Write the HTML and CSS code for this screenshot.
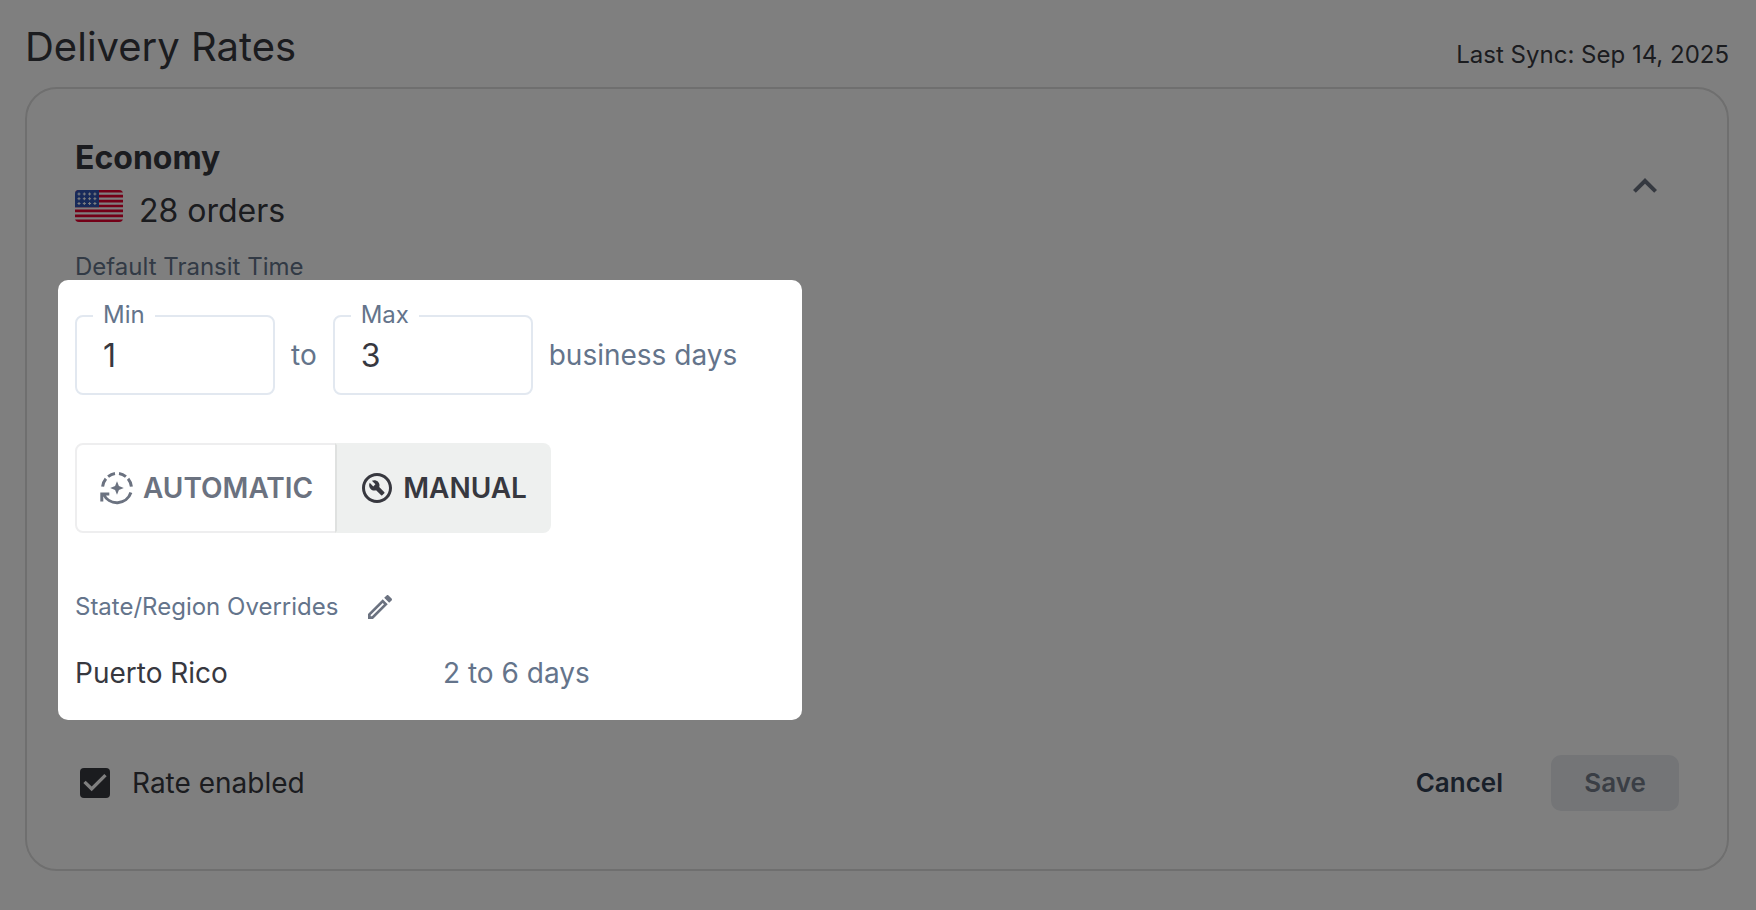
FILE: index.html
```html
<!DOCTYPE html>
<html lang="en">
<head>
<meta charset="utf-8">
<meta name="viewport" content="width=device-width, initial-scale=1">
<title>Delivery Rates</title>
<link rel="stylesheet" href="styles.css">
</head>
<body>
<main class="page">
  <header class="page-header">
    <h1 class="page-title">Delivery Rates</h1>
    <p class="last-sync">Last Sync: Sep 14, 2025</p>
  </header>
  <section class="card">
    <div class="summary">
      <div class="summary-text">
        <h2 class="rate-name">Economy</h2>
        <div class="orders">
          <svg class="flag" viewBox="0 0 48 32" role="img" aria-label="United States">
            <defs><clipPath id="flag-shape"><rect width="48" height="32" rx="4"/></clipPath></defs>
            <g clip-path="url(#flag-shape)">
              <rect width="48" height="32" fill="#fff"/>
              <path d="M0 1.230H48M0 6.150H48M0 11.080H48M0 16H48M0 20.920H48M0 25.850H48M0 30.770H48" stroke="#e6002e" stroke-width="2.600"/>
              <rect width="24" height="17.230" fill="#3055b5"/>
              <path d="M4 2.500v3M2.500 4h3M9.300 2.500v3M7.800 4h3M14.600 2.500v3M13.100 4h3M19.900 2.500v3M18.400 4h3M4 7.200v3M2.500 8.700h3M9.300 7.200v3M7.800 8.700h3M14.600 7.200v3M13.100 8.700h3M19.900 7.200v3M18.400 8.700h3M4 12v3M2.500 13.500h3M9.300 12v3M7.800 13.500h3M14.600 12v3M13.100 13.500h3M19.900 12v3M18.400 13.500h3" stroke="#fff" stroke-width="1"/>
            </g>
          </svg>
          <span>28 orders</span>
        </div>
      </div>
      <button class="icon-button collapse" type="button" aria-label="Collapse" aria-expanded="true">
        <svg class="icon-large" viewBox="0 0 24 24" aria-hidden="true"><path d="m12 8-6 6 1.410 1.410L12 10.830l4.590 4.580L18 14z"/></svg>
      </button>
    </div>
    <h3 class="section-label">Default Transit Time</h3>

    <div class="spotlight">
      <div class="transit">
        <div class="field">
          <label class="field-label" for="min-days">Min</label>
          <input class="field-input" id="min-days" type="text" inputmode="numeric" value="1">
        </div>
        <span>to</span>
        <div class="field">
          <label class="field-label" for="max-days">Max</label>
          <input class="field-input" id="max-days" type="text" inputmode="numeric" value="3">
        </div>
        <span>business days</span>
      </div>

      <div class="toggle" role="group" aria-label="Transit time mode">
        <button class="toggle-button" type="button" aria-pressed="false">
          <svg class="icon-medium" viewBox="0 0 36 36" aria-hidden="true">
            <path d="M3.600 16.700A14.500 14.500 0 0 1 6.900 8.700M9.100 6.600A14.500 14.500 0 0 1 16 3.600M20 3.600A14.500 14.500 0 0 1 26.900 6.600M29.100 8.700A14.500 14.500 0 0 1 32.400 16.700M31.900 22.500A14.700 14.700 0 0 1 4.500 24M2.800 31.500V24.100H10.300" fill="none" stroke="currentColor" stroke-width="3"/>
            <path d="M18 11.200l1.900 4.900 4.900 1.900-4.900 1.900-1.900 4.900-1.900-4.900-4.900-1.900 4.900-1.900z"/>
          </svg>
          AUTOMATIC
        </button>
        <button class="toggle-button is-selected" type="button" aria-pressed="true">
          <svg class="icon-medium" viewBox="0 0 24 24" aria-hidden="true">
            <path d="M12 2C6.480 2 2 6.480 2 12s4.480 10 10 10 10-4.480 10-10S17.520 2 12 2zm0 18c-4.410 0-8-3.590-8-8s3.590-8 8-8 8 3.590 8 8-3.590 8-8 8z"/>
            <path d="M13.490 11.380c.43-1.220.17-2.640-.81-3.620-1.110-1.110-2.790-1.300-4.100-.59l2.350 2.350-1.410 1.410-2.350-2.350c-.71 1.320-.52 2.990.59 4.100.98.98 2.400 1.240 3.620.81l3.410 3.410c.2.200.51.200.71 0l1.400-1.400c.2-.2.200-.51 0-.71l-3.410-3.410z"/>
          </svg>
          MANUAL
        </button>
      </div>

      <div class="overrides-head">
        <h3 class="section-label" id="overrides-title">State/Region Overrides</h3>
        <button class="icon-button" type="button" aria-label="Edit overrides">
          <svg class="icon-small" viewBox="0 0 24 24" aria-hidden="true"><path d="M14.060 9.020l.92.920L5.920 19H5v-.92l9.060-9.060M17.660 3c-.25 0-.51.100-.7.290l-1.830 1.830 3.750 3.750 1.830-1.830c.39-.39.390-1.020 0-1.410l-2.340-2.340c-.2-.2-.45-.29-.71-.29zm-3.600 3.190L3 17.250V21h3.750L17.810 9.940l-3.750-3.750z"/></svg>
        </button>
      </div>
      <table class="overrides" aria-labelledby="overrides-title">
        <tbody>
          <tr><th class="region" scope="row">Puerto Rico</th><td class="days">2 to 6 days</td></tr>
        </tbody>
      </table>
    </div>

    <footer class="actions">
      <label class="enabled"><input class="checkbox" type="checkbox" checked>Rate enabled</label>
      <div class="buttons">
        <button class="button" type="button">Cancel</button>
        <button class="button button-primary" type="button" disabled>Save</button>
      </div>
    </footer>
  </section>
</main>
</body>
</html>
```

FILE: styles.css
```css
:root {
  --ink: #37383f;
  --muted: #64748b;
  --icon: #6b7280;
  --line: #e2e8f0;
}

* {
  box-sizing: border-box;
}

body {
  margin: 0;
  overflow-x: hidden;
  background: #fff;
  color: var(--ink);
  font-family: Inter, "Liberation Sans", sans-serif;
  font-size: 28px;
  line-height: 32px;
}

h1,
h2,
h3,
p {
  margin: 0;
}

button,
input {
  font: inherit;
}

svg {
  display: block;
  flex: none;
  fill: currentColor;
}

.page {
  position: relative;
  min-height: 100vh;
  padding: 23px 27px 39px 25px;
  overflow: hidden;
}

.page-header {
  display: flex;
  justify-content: space-between;
  align-items: flex-end;
  margin-bottom: 16px;
}

.page-title {
  font-size: 40px;
  font-weight: 400;
  line-height: 48px;
}

.last-sync {
  font-size: 24px;
}

.card {
  padding: 49px 48px 58px;
  border: 2px solid #dedede;
  border-radius: 32px;
}

.summary {
  display: flex;
  justify-content: space-between;
  align-items: flex-start;
}

.summary-text {
  display: grid;
  gap: 12px;
  font-size: 32px;
  line-height: 42px;
}

.rate-name {
  font-size: 32px;
  font-weight: 700;
  line-height: 40px;
}

.orders {
  display: flex;
  align-items: flex-start;
  gap: 16px;
}

.flag {
  width: 48px;
  height: 32px;
}

.icon-button {
  display: flex;
  padding: 10px;
  border: 0;
  background: none;
  color: var(--icon);
}

.collapse {
  margin-top: 14px;
}

.icon-large {
  width: 48px;
  height: 48px;
}

.icon-medium {
  width: 36px;
  height: 36px;
}

.icon-small {
  width: 32px;
  height: 32px;
}

.section-label {
  color: var(--muted);
  font-size: 24px;
  font-weight: 400;
  line-height: 28px;
}

.summary + .section-label {
  margin-top: 21px;
}

/* The highlighted step; its shadow dims the rest of the page. */
.spotlight {
  position: relative;
  z-index: 1;
  display: flex;
  flex-direction: column;
  align-items: flex-start;
  max-width: 744px;
  margin-top: -1px;
  margin-left: -17px;
  padding: 35px 17px 31px;
  border-radius: 10px;
  background: #fff;
  box-shadow: 0 0 0 9999px rgba(0, 0, 0, 0.5);
}

.transit {
  display: flex;
  align-items: center;
  gap: 16px;
  color: var(--muted);
}

.field {
  position: relative;
  width: 200px;
}

.field-label {
  position: absolute;
  top: -14px;
  left: 18px;
  padding: 0 10px;
  background: #fff;
  font-size: 24px;
  line-height: 28px;
}

.field-input {
  display: block;
  width: 100%;
  height: 80px;
  padding: 0 26px;
  border: 2px solid var(--line);
  border-radius: 8px;
  background: none;
  color: var(--ink);
  font-size: 32px;
}

.toggle {
  display: flex;
  margin: 48px 0;
}

.toggle-button {
  display: flex;
  align-items: center;
  gap: 8px;
  height: 90px;
  padding: 0 22px;
  border: 2px solid #eeeeef;
  border-radius: 8px 0 0 8px;
  background: #fff;
  color: var(--icon);
  font-weight: 600;
}

.toggle-button.is-selected {
  margin-left: -2px;
  border-color: #eef0ef;
  border-left-color: #dfe1e0;
  border-radius: 0 8px 8px 0;
  background: #eef0ef;
  color: var(--ink);
}

.overrides-head {
  display: flex;
  align-items: center;
  gap: 16px;
}

.overrides {
  margin-top: 24px;
  border-collapse: collapse;
}

.region,
.days {
  padding: 0;
  font-weight: 400;
  text-align: left;
}

.region {
  width: 368px;
}

.days {
  color: var(--muted);
}

.actions {
  display: flex;
  justify-content: space-between;
  align-items: center;
  margin-top: 35px;
}

.enabled {
  display: flex;
  align-items: center;
  gap: 22px;
}

.checkbox {
  width: 30px;
  height: 30px;
  margin: 0 0 0 5px;
  appearance: none;
  border-radius: 4px;
  background: #fff;
  border: 3px solid var(--ink);
}

.checkbox:checked {
  border: 0;
  background: var(--ink) url("data:image/svg+xml,%3Csvg xmlns='http://www.w3.org/2000/svg' viewBox='3 3 18 18'%3E%3Cpath fill='white' d='M10 17l-5-5 1.410-1.410L10 14.170l7.590-7.590L19 8z'/%3E%3C/svg%3E");
}

.buttons {
  display: flex;
  gap: 16px;
}

.button {
  min-width: 128px;
  height: 56px;
  padding: 0 32px;
  border: 0;
  border-radius: 10px;
  background: none;
  color: #334155;
  font-size: 26px;
  font-weight: 600;
}

.button-primary:disabled {
  background: #e8ebef;
  color: #757d8a;
}
```
